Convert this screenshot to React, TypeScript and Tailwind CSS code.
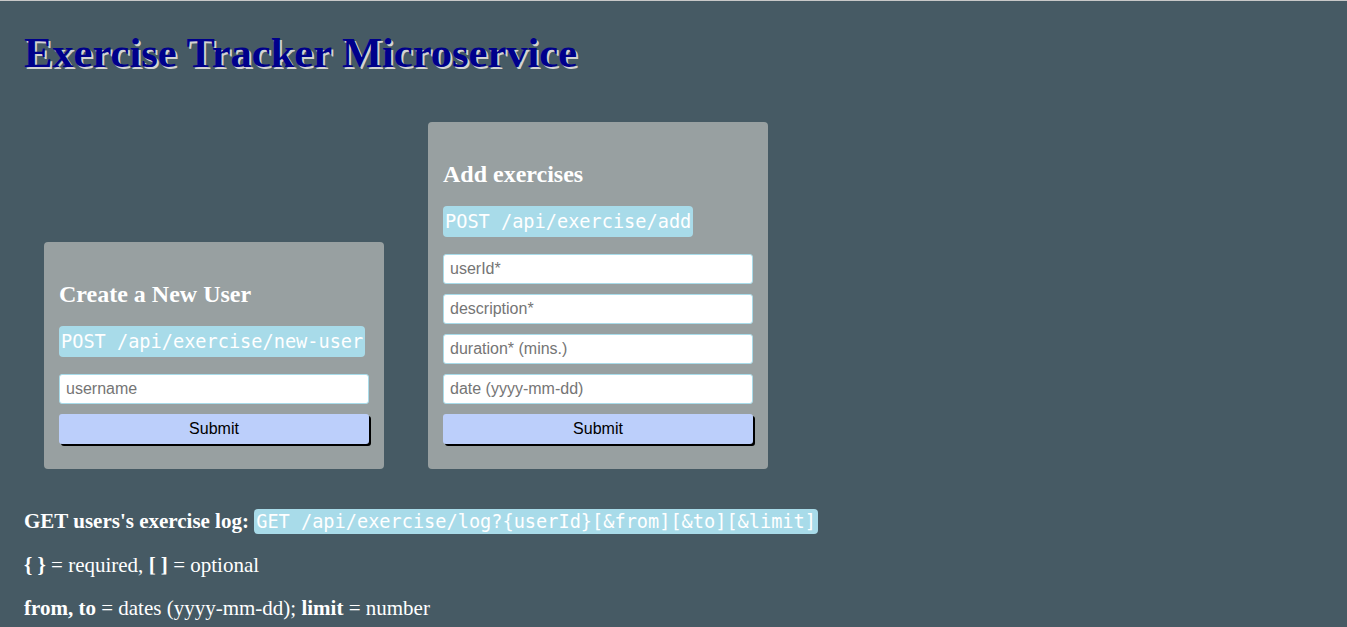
export default function App() {
  const serif = { fontFamily: '"Liberation Serif", serif' };
  return (
    <div
      className="min-h-[627px] bg-[#465a64] border-t border-[#c8c8c8] px-6 pt-[31px] text-white text-[21px]"
      style={serif}
    >
      <h1 className="text-[42.5px] font-bold text-[#00008b] leading-none [text-shadow:2px_2px_0_#d3d3d3]">
        Exercise Tracker Microservice
      </h1>

      <div className="flex items-end gap-[44px] pl-5 mt-[47px]">
        <Card title="Create a New User" endpoint="POST /api/exercise/new-user">
          <Field placeholder="username" />
        </Card>
        <Card title="Add exercises" endpoint="POST /api/exercise/add">
          <Field placeholder="userId*" />
          <Field placeholder="description*" />
          <Field placeholder="duration* (mins.)" />
          <Field placeholder="date (yyyy-mm-dd)" />
        </Card>
      </div>

      <div className="mt-[39px] space-y-[17px] leading-[26px]">
        <p>
          <b>GET users's exercise log: </b>
          <Code>GET /api/exercise/log?{'{userId}'}[&amp;from][&amp;to][&amp;limit]</Code>
        </p>
        <p>
          <b>{'{ }'}</b> = required, <b>[ ]</b> = optional
        </p>
        <p>
          <b>from, to</b> = dates (yyyy-mm-dd); <b>limit</b> = number
        </p>
      </div>
    </div>
  );
}

function Code({ children }: { children: React.ReactNode }) {
  return (
    <code
      className="bg-[#a8dbe9] text-white rounded-[4px] px-[2px] py-[2px] text-[18.6px]"
      style={{ fontFamily: '"DejaVu Sans Mono", "Liberation Mono", monospace' }}
    >
      {children}
    </code>
  );
}

function Card({
  title,
  endpoint,
  children,
}: {
  title: string;
  endpoint: string;
  children: React.ReactNode;
}) {
  return (
    <div className="w-[340px] bg-[#98a0a1] rounded-[4px] px-[15px] pt-[38px] pb-[25px]">
      <h3 className="text-[24px] font-bold leading-[28px]">{title}</h3>
      <div className="mt-[20px] mb-[18px] h-[28px] flex items-center">
        <Code>{endpoint}</Code>
      </div>
      <form className="flex flex-col gap-[10px]" onSubmit={(e) => e.preventDefault()}>
        {children}
        <button
          type="submit"
          className="h-[30px] bg-[#bccffb] text-black text-[16px] rounded-[3px] shadow-[2px_2px_0_#000]"
          style={{ fontFamily: '"Liberation Sans", Arial, sans-serif' }}
        >
          Submit
        </button>
      </form>
    </div>
  );
}

function Field({ placeholder }: { placeholder: string }) {
  return (
    <input
      placeholder={placeholder}
      className="h-[30px] w-full bg-white border border-[#a8dbe9] rounded-[3px] px-[6px] text-[16px] text-black placeholder:text-[#757575] outline-none"
      style={{ fontFamily: '"Liberation Sans", Arial, sans-serif' }}
    />
  );
}
